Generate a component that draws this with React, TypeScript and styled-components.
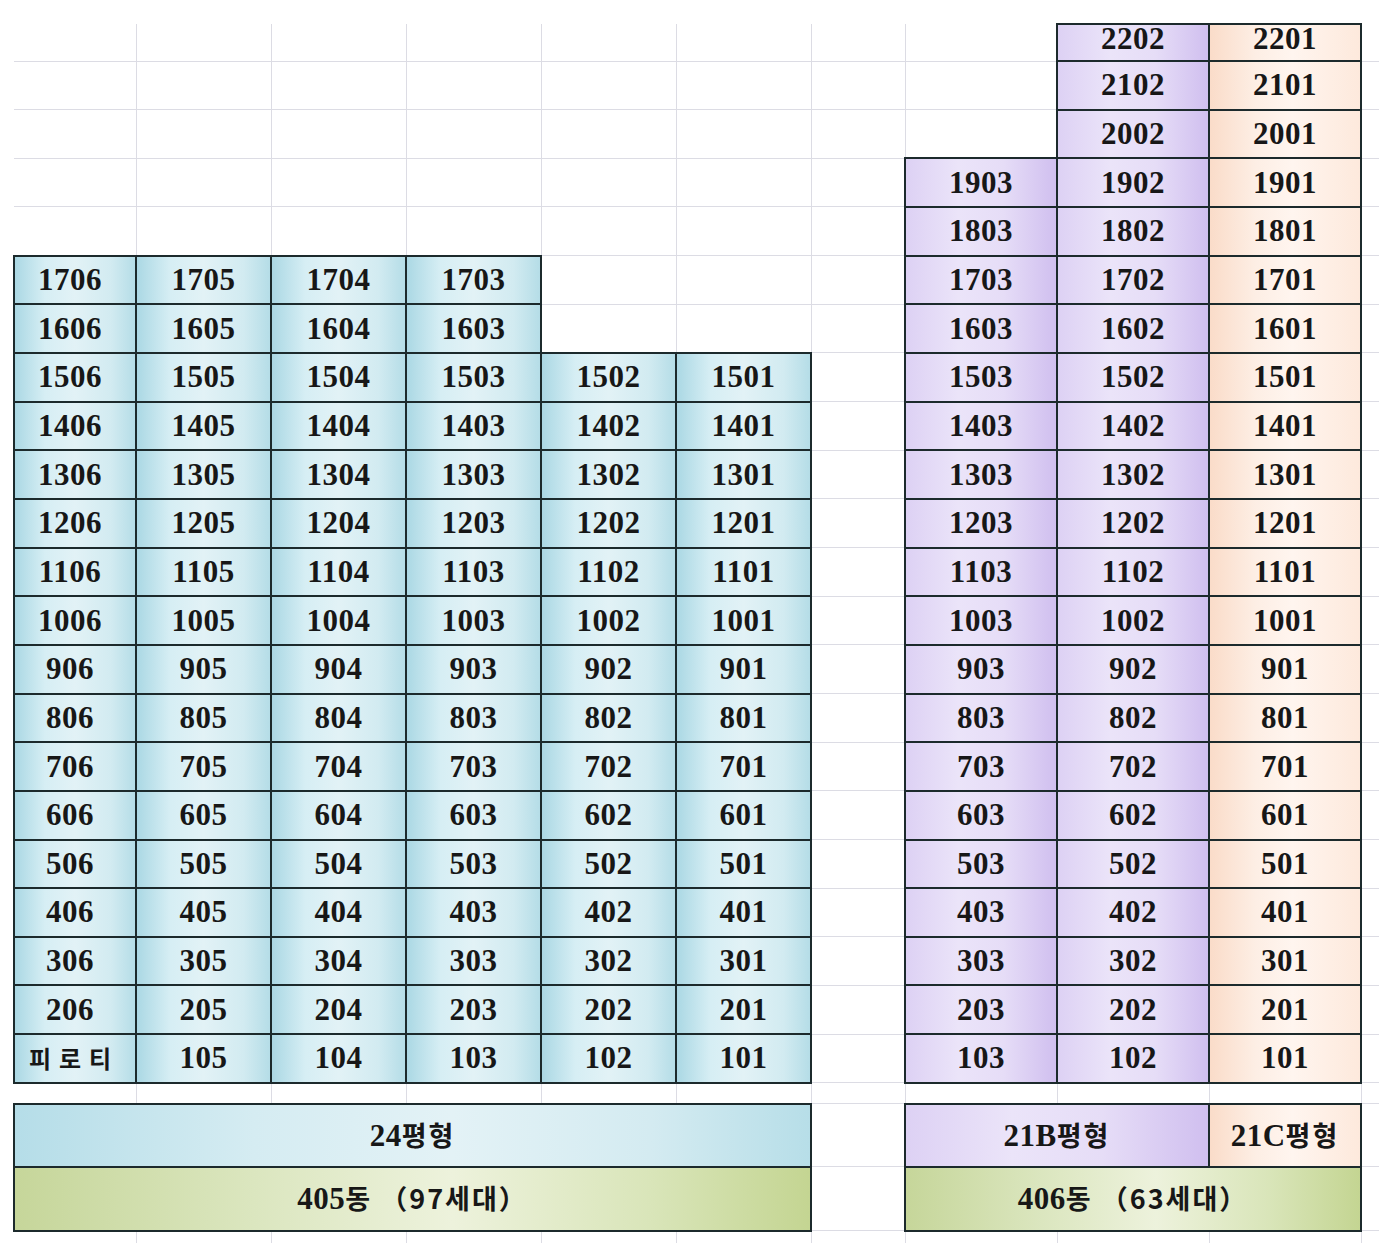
import styled, { createGlobalStyle } from "styled-components";

const GlobalStyle = createGlobalStyle`
  html, body {
    margin: 0;
    padding: 0;
    background: #ffffff;
  }
`;

type Tone = "blank" | "blue" | "purple" | "peach" | "green" | "band";

const fills: Record<Tone, string> = {
  blank: "#ffffff",
  blue: "linear-gradient(90deg, #abd8e4 0%, #d6eef4 25%, #e2f2f6 50%, #d2ebf1 80%, #b5dde7 100%)",
  purple: "linear-gradient(90deg, #ddd1f4 0%, #ebe4f9 35%, #e6ddf7 65%, #d0bfef 100%)",
  peach: "linear-gradient(90deg, #fadcc9 0%, #fdeee4 30%, #fff5ef 55%, #fde9dc 100%)",
  green: "linear-gradient(90deg, #c6d69a 0%, #dbe6bf 30%, #edf2dc 55%, #d9e5b9 80%, #c4d592 100%)",
  band: "linear-gradient(90deg, #b5dde8 0%, #d5ecf2 30%, #e3f2f6 55%, #d4ebf1 80%, #b7dee8 100%)",
};

const Page = styled.div`
  padding: 23px 0 0 13px;
  height: 1252px;
  overflow: hidden;
  box-sizing: border-box;
`;

const Sheet = styled.table`
  border-collapse: collapse;
  table-layout: fixed;
  width: 1365px;
  font-family: "Liberation Serif", "Noto Sans CJK KR", serif;
  font-weight: 700;
  color: #171717;
`;

const Row = styled.tr<{ $h: number }>`
  height: ${(p) => p.$h}px;
`;

const Cell = styled.td<{
  $tone: Tone;
  $edge?: boolean;
  $open?: boolean;
  $lift?: boolean;
  $first?: boolean;
}>`
  padding: 0 ${(p) => (p.$first ? 10 : 0)}px ${(p) => (p.$lift ? 7 : 0)}px 0;
  text-align: center;
  vertical-align: middle;
  font-size: 31px;
  letter-spacing: 0.5px;
  line-height: 26px;
  background: ${(p) => fills[p.$tone]};
  ${(p) =>
    p.$tone === "blank"
      ? `
    border-right: ${p.$edge ? "none" : "1px solid #dcdce4"};
    border-bottom: ${p.$open ? "none" : "1px solid #dcdce4"};
  `
      : `border: 2px solid #1c2a2c;`}
`;

const Label = styled.span`
  display: inline-block;
  font-family: "Noto Sans CJK KR", sans-serif;
  font-weight: 700;
  font-size: 24px;
  letter-spacing: 8px;
  margin-right: -8px;
`;

const Hangul = styled.span`
  font-family: "Noto Sans CJK KR", sans-serif;
  font-weight: 700;
  font-size: 27px;
  letter-spacing: 2px;
`;

const widths = [122, 135, 135, 135, 135, 135, 94, 152, 152, 152, 18];

const floors = Array.from({ length: 22 }, (_, i) => 22 - i);

function leftUnit(floor: number, unit: number) {
  if (floor > 17) return null;
  if (floor > 15 && unit < 3) return null;
  if (floor === 1 && unit === 6) return "피로티";
  return `${floor}0${unit}`;
}

function rightUnit(floor: number, unit: number) {
  if (unit === 3 && floor > 19) return null;
  return `${floor}0${unit}`;
}

export default function App() {
  return (
    <>
      <GlobalStyle />
      <Page>
        <Sheet>
          <colgroup>
            {widths.map((w, i) => (
              <col key={i} style={{ width: w }} />
            ))}
          </colgroup>
          <tbody>
            {floors.map((floor, r) => (
              <Row key={floor} $h={r === 0 ? 37 : 48.67}>
                {[6, 5, 4, 3, 2, 1].map((u) => {
                  const v = leftUnit(floor, u);
                  if (!v) return <Cell key={u} $tone="blank" />;
                  return (
                    <Cell key={u} $tone="blue" $lift={r === 0} $first={u === 6}>
                      {v === "피로티" ? <Label>{v}</Label> : v}
                    </Cell>
                  );
                })}
                <Cell $tone="blank" />
                {[3, 2, 1].map((u) => {
                  const v = rightUnit(floor, u);
                  if (!v) return <Cell key={u} $tone="blank" />;
                  return (
                    <Cell key={u} $tone={u === 1 ? "peach" : "purple"} $lift={r === 0}>
                      {v}
                    </Cell>
                  );
                })}
                <Cell $tone="blank" $edge />
              </Row>
            ))}
            <Row $h={21}>
              {widths.map((_, i) => (
                <Cell key={i} $tone="blank" $edge={i === widths.length - 1} />
              ))}
            </Row>
            <Row $h={63}>
              <Cell $tone="band" colSpan={6}>
                24<Hangul>평형</Hangul>
              </Cell>
              <Cell $tone="blank" />
              <Cell $tone="purple" colSpan={2}>
                21B<Hangul>평형</Hangul>
              </Cell>
              <Cell $tone="peach">
                21C<Hangul>평형</Hangul>
              </Cell>
              <Cell $tone="blank" $edge />
            </Row>
            <Row $h={64}>
              <Cell $tone="green" colSpan={6}>
                405<Hangul>동 （97세대）</Hangul>
              </Cell>
              <Cell $tone="blank" />
              <Cell $tone="green" colSpan={3}>
                406<Hangul>동 （63세대）</Hangul>
              </Cell>
              <Cell $tone="blank" $edge />
            </Row>
            <Row $h={12}>
              {widths.map((_, i) => (
                <Cell key={i} $tone="blank" $edge={i === widths.length - 1} $open />
              ))}
            </Row>
          </tbody>
        </Sheet>
      </Page>
    </>
  );
}
